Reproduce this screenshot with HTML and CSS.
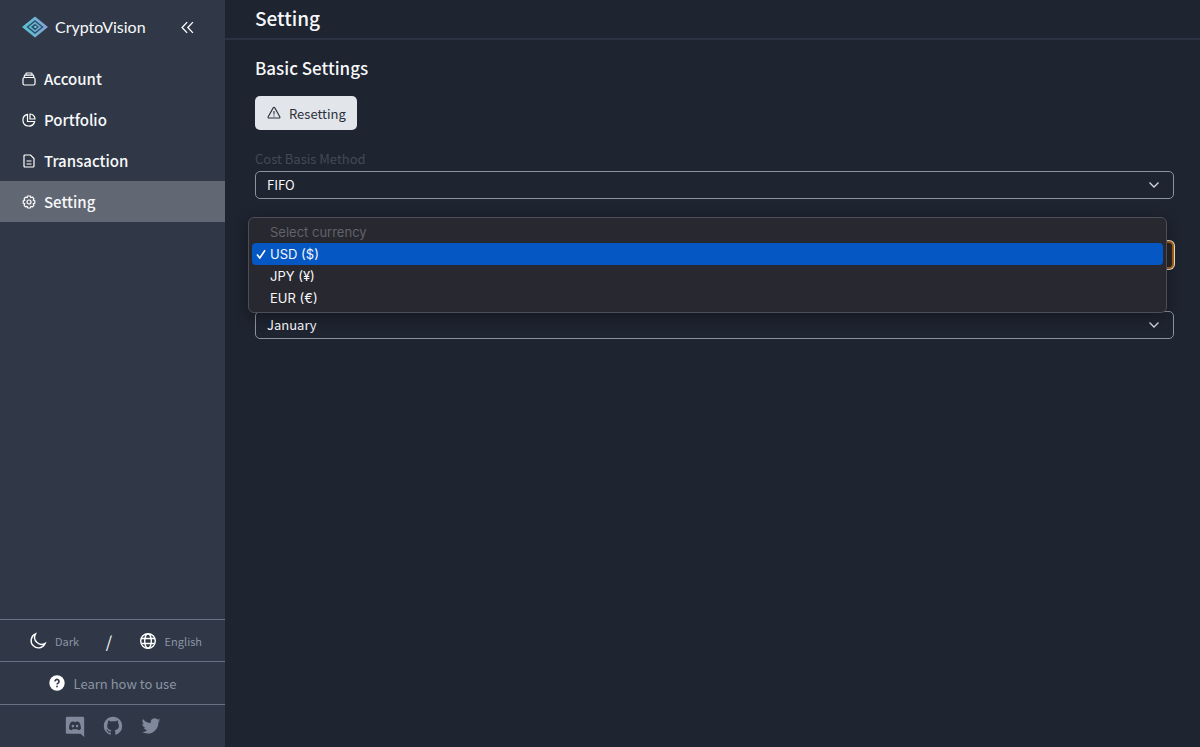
FILE: index.html
```html
<!DOCTYPE html>
<html lang="en">
<head>
    <meta charset="UTF-8">
    <meta name="viewport" content="width=device-width, initial-scale=1.0">
    <title>CryptoVision</title>
    <link rel="stylesheet" href="styles.css">
</head>
<body>

    <aside class="sidebar">
        <div class="brand">
            <svg class="brand-logo" viewBox="0 0 26 22">
                <defs>
                    <linearGradient id="logoFill" x1="0" y1="0" x2="1" y2="0">
                        <stop offset="0" stop-color="#55c4cf"/>
                        <stop offset="1" stop-color="#8a9fd8"/>
                    </linearGradient>
                </defs>
                <path fill="url(#logoFill)" d="M13 0.5 26 11 13 21.5 0 11z"/>
                <path fill="none" stroke="#27536c" stroke-width="1.4" d="M13 5 20.5 11 13 17 5.5 11z"/>
                <path fill="#27536c" d="M13 7.800 17 11 13 14.200 9 11z"/>
                <circle cx="13.4" cy="10.900" r="1.200" fill="#7cc4dc"/>
            </svg>
            <span class="brand-name">CryptoVision</span>
            <button class="collapse-button" type="button" aria-label="Collapse menu">
                <svg class="icon-collapse" viewBox="0 0 12 12"><path d="M5.7 1 1 6l4.7 5M11 1 6.3 6l4.7 5"/></svg>
            </button>
        </div>

        <nav class="menu">
            <a class="menu-item" href="#account">
                <svg class="menu-icon" viewBox="0 0 14 14"><rect x="1" y="5.500" width="12" height="7.500" rx="1.500"/><path d="M2.300 5.500V4q0-.8.8-.8h7.800q.8 0 .8.8v1.500M4 3.200V1.600q0-.6.6-.6h4.800q.6 0 .6.6v1.600"/></svg>
                Account
            </a>
            <a class="menu-item" href="#portfolio">
                <svg class="menu-icon" viewBox="0 0 14 14"><path d="M5.500 1.400A5.900 5.900 0 1 0 12.600 8.500H5.500z"/><path d="M8 1v5h5A5 5 0 0 0 8 1z"/></svg>
                Portfolio
            </a>
            <a class="menu-item" href="#transaction">
                <svg class="menu-icon" viewBox="0 0 14 14"><path d="M2 2q0-1 1-1h5.500L12 4.500V12q0 1-1 1H3q-1 0-1-1zM4.500 7h5M4.500 10h5"/></svg>
                Transaction
            </a>
            <a class="menu-item active" href="#setting">
                <svg class="menu-icon" viewBox="0 0 14 14"><path d="M5.700 1h2.600l.6 1.500 1.700-.3 1.300 1.600-.6 1.500 1.500.7v2l-1.500.7.6 1.500-1.300 1.600-1.700-.3L8.300 13H5.700l-.6-1.500-1.700.3-1.300-1.600.6-1.500L1.200 8V6l1.500-.7-.6-1.500 1.300-1.600 1.700.3z"/><circle cx="7" cy="7" r="2"/></svg>
                Setting
            </a>
        </nav>

        <div class="sidebar-row preferences">
            <button class="pref-button" type="button">
                <svg class="icon-white" viewBox="0 0 18 18"><path d="M6.500 1.900A7.300 7.300 0 1 0 16.200 11.300 7 7 0 0 1 6.500 1.900z"/></svg>
                Dark
            </button>
            <span class="divider">/</span>
            <button class="pref-button" type="button">
                <svg class="icon-white" viewBox="0 0 18 18"><circle cx="9" cy="9" r="7.300"/><ellipse cx="9" cy="9" rx="3.300" ry="7.300"/><path d="M2.300 6.500h13.400M2.300 11.500h13.400"/></svg>
                English
            </button>
        </div>
        <div class="sidebar-row">
            <a class="help-link" href="#help">
                <svg class="icon-help" viewBox="0 0 16 16"><circle cx="8" cy="8" r="7.700" fill="#fff"/><path d="M6 6.400a2 2 0 1 1 3.100 1.700C8.300 8.600 8 8.800 8 9.600" fill="none" stroke="#2f3847" stroke-width="1.600"/><rect x="7.200" y="10.700" width="1.600" height="1.600" fill="#2f3847"/></svg>
                Learn how to use
            </a>
        </div>
        <div class="sidebar-row socials">
            <a href="#discord" aria-label="Discord">
                <svg class="social-icon" viewBox="0 0 24 24"><path fill-rule="evenodd" d="M3.500 2h17A1.500 1.500 0 0 1 22 3.500V24l-4-3.500H3.500A1.500 1.500 0 0 1 2 19V3.500A1.500 1.500 0 0 1 3.500 2zM8 7.500C6.500 8 5.500 12 5.500 15c1 1.300 2.500 1.500 3.200 1.500l.8-1.300c1.600.4 3.400.4 5 0l.8 1.300c.7 0 2.200-.2 3.200-1.500 0-3-1-7-2.500-7.500-.8-.4-1.700-.5-2.500-.5l-.4.700h-2.200L10.500 7c-.8 0-1.700.1-2.500.5zM9.700 10.500a1.400 1.500 0 1 1 0 3 1.400 1.500 0 0 1 0-3zM14.300 10.500a1.400 1.500 0 1 1 0 3 1.400 1.500 0 0 1 0-3z"/></svg>
            </a>
            <a href="#github" aria-label="GitHub">
                <svg class="social-icon" viewBox="0 0 24 24"><path d="M12 2C6.475 2 2 6.475 2 12a9.994 9.994 0 0 0 6.838 9.488c.5.087.687-.213.687-.476 0-.237-.013-1.024-.013-1.862-2.512.463-3.162-.612-3.362-1.175-.113-.288-.6-1.175-1.025-1.413-.35-.187-.85-.65-.013-.662.788-.013 1.350.725 1.538 1.025.9 1.512 2.338 1.087 2.912.825.088-.65.35-1.087.638-1.337-2.225-.25-4.550-1.113-4.550-4.938 0-1.088.387-1.987 1.025-2.688-.1-.25-.45-1.275.1-2.650 0 0 .837-.262 2.750 1.026a9.280 9.280 0 0 1 2.500-.338c.85 0 1.700.112 2.500.337 1.912-1.300 2.750-1.024 2.750-1.024.55 1.375.2 2.400.1 2.650.637.7 1.025 1.587 1.025 2.687 0 3.838-2.337 4.688-4.562 4.938.362.312.675.912.675 1.850 0 1.337-.013 2.412-.013 2.750 0 .262.188.574.688.474A10.016 10.016 0 0 0 22 12c0-5.525-4.475-10-10-10z"/></svg>
            </a>
            <a href="#twitter" aria-label="Twitter">
                <svg class="social-icon" viewBox="0 0 24 24"><path d="M22.162 5.656a8.384 8.384 0 0 1-2.402.658A4.196 4.196 0 0 0 21.600 4c-.82.488-1.719.83-2.656 1.015a4.182 4.182 0 0 0-7.126 3.814 11.874 11.874 0 0 1-8.620-4.370 4.168 4.168 0 0 0-.566 2.103c0 1.450.738 2.731 1.860 3.481a4.168 4.168 0 0 1-1.894-.523v.052a4.185 4.185 0 0 0 3.355 4.101 4.210 4.210 0 0 1-1.890.072A4.185 4.185 0 0 0 7.970 16.650a8.394 8.394 0 0 1-6.191 1.732 11.830 11.830 0 0 0 6.410 1.880c7.693 0 11.900-6.373 11.900-11.900 0-.18-.005-.362-.013-.54a8.496 8.496 0 0 0 2.087-2.165z"/></svg>
            </a>
        </div>
    </aside>

    <main class="content">
        <header class="page-header">
            <h1>Setting</h1>
        </header>
        <section class="settings">
            <h2>Basic Settings</h2>
            <button class="reset-button" type="button">
                <svg class="icon-warning" viewBox="0 0 14 14"><path d="M6.200 1.900q.8-1.200 1.600 0l5 8.800q.5 1.300-.8 1.300H2q-1.300 0-.8-1.300zM7 5v3.500M7 9.400v1.200"/></svg>
                Resetting
            </button>

            <div class="field">
                <label for="costBasis">Cost Basis Method</label>
                <div class="select-box">
                    <select id="costBasis">
                        <option>FIFO</option>
                    </select>
                    <svg class="chevron" viewBox="0 0 12 12"><path d="M1.500 3.500 6 8l4.500-4.500"/></svg>
                </div>
            </div>

            <div class="field">
                <div class="select-box open">
                    <select id="currency" aria-label="Currency"></select>
                </div>
                <ul class="dropdown" role="listbox" aria-label="Select currency">
                    <li class="option disabled" role="option" aria-disabled="true">Select currency</li>
                    <li class="option selected" role="option" aria-selected="true">
                        <svg class="check" viewBox="0 0 10 10"><path d="M1 5.500 3.800 9 9 1.200"/></svg>USD ($)
                    </li>
                    <li class="option" role="option">JPY (¥)</li>
                    <li class="option" role="option">EUR (€)</li>
                </ul>
            </div>

            <div class="field">
                <div class="select-box">
                    <select id="startMonth" aria-label="Month">
                        <option>January</option>
                    </select>
                    <svg class="chevron" viewBox="0 0 12 12"><path d="M1.500 3.500 6 8l4.500-4.500"/></svg>
                </div>
            </div>
        </section>
    </main>

</body>
</html>
```

FILE: styles.css
```css
* {
    box-sizing: border-box;
}

body {
    margin: 0;
    display: flex;
    min-height: 100vh;
    background-color: #1e2430;
    color: #f7f8fa;
    font-family: "Noto Sans CJK JP", "Noto Sans", sans-serif;
    font-size: 13px;
}

button,
select {
    font: inherit;
    color: inherit;
    cursor: pointer;
}

a {
    color: inherit;
    text-decoration: none;
}

svg {
    display: block;
    flex-shrink: 0;
}

.sidebar {
    width: 225px;
    flex-shrink: 0;
    display: flex;
    flex-direction: column;
    background-color: #303847;
}

.brand {
    display: flex;
    align-items: center;
    height: 58px;
    padding: 0 31px 4px 22px;
}

.brand-logo {
    width: 26px;
    height: 22px;
    margin-right: 7px;
}

.brand-name {
    font-family: Lato, sans-serif;
    font-size: 16px;
    line-height: 20px;
}

.collapse-button {
    margin-left: auto;
    padding: 0;
    border: none;
    background: none;
}

.icon-collapse {
    width: 13px;
    height: 13px;
    fill: none;
    stroke: #fff;
    stroke-width: 1.2;
}

.menu {
    flex-grow: 1;
}

.menu-item {
    display: flex;
    align-items: center;
    gap: 8px;
    height: 41px;
    padding-left: 22px;
    font-size: 15px;
    font-weight: 500;
}

.menu-item.active {
    background-color: #616773;
}

.menu-icon {
    width: 14px;
    height: 14px;
    fill: none;
    stroke: #fff;
    stroke-width: 1.2;
}

.sidebar-row {
    display: flex;
    align-items: center;
    justify-content: center;
    height: 43px;
    border-top: 1px solid #687284;
    color: #8b94a5;
}

.preferences {
    height: 42px;
    justify-content: space-between;
    padding: 0 23px 0 29px;
}

.pref-button {
    display: flex;
    align-items: center;
    gap: 8px;
    padding: 0;
    border: none;
    background: none;
    font-size: 11px;
}

.divider {
    color: #fff;
    font-size: 16px;
}

.icon-white {
    width: 18px;
    height: 18px;
    fill: none;
    stroke: #fff;
    stroke-width: 1.4;
}

.help-link {
    display: flex;
    align-items: center;
    gap: 9px;
}

.icon-help {
    width: 16px;
    height: 16px;
}

.socials {
    gap: 16px;
}

.social-icon {
    width: 22px;
    height: 22px;
    fill: #7f899b;
}

.content {
    flex-grow: 1;
    min-width: 0;
}

.page-header {
    display: flex;
    align-items: center;
    height: 40px;
    padding: 0 30px 2px;
    border-bottom: 2px solid #2b3140;
}

h1,
h2 {
    margin: 0;
    font-weight: 500;
    line-height: 26px;
}

h1 {
    font-size: 19px;
}

h2 {
    font-size: 17px;
}

.settings {
    padding: 15px 26px 0 30px;
}

.reset-button {
    display: flex;
    align-items: center;
    gap: 8px;
    height: 34px;
    margin: 15px 0 20px;
    padding: 0 11px 0 12px;
    border: none;
    border-radius: 5px;
    background-color: #e2e5ea;
    color: #2b303b;
}

.icon-warning {
    width: 14px;
    height: 14px;
    fill: none;
    stroke: #2b303b;
    stroke-width: 1.1;
}

.field {
    position: relative;
    display: flex;
    flex-direction: column;
    justify-content: flex-end;
    height: 49px;
    margin-bottom: 21px;
}

.field label {
    height: 21px;
    color: #434a57;
    line-height: 18px;
}

.select-box {
    display: flex;
    align-items: center;
    height: 28px;
    padding-right: 13px;
    border: 1px solid #8c929e;
    border-radius: 5px;
}

.select-box.open {
    border: 2px solid #a4631a;
    background-color: #2a2624;
    box-shadow: 0 0 0 1px #f3dfc8;
}

.select-box select {
    flex-grow: 1;
    padding: 0 11px;
    border: none;
    outline: none;
    background: transparent;
    appearance: none;
    line-height: 20px;
}

.chevron {
    width: 12px;
    height: 12px;
    fill: none;
    stroke: #d5d9e0;
    stroke-width: 1.3;
    pointer-events: none;
}

.dropdown {
    position: absolute;
    top: -3px;
    left: -7px;
    z-index: 1;
    width: 100%;
    margin: 0;
    padding: 3px;
    border: 1px solid #4d4e57;
    border-radius: 6px;
    background-color: #282830;
    box-shadow: 0 4px 14px rgba(0, 0, 0, 0.35);
    list-style: none;
    font-family: Inter, sans-serif;
    line-height: 22px;
}

.option {
    position: relative;
    padding-left: 18px;
    border-radius: 4px;
}

.option.disabled {
    color: #62626a;
}

.option.selected {
    background-color: #0558c4;
}

.check {
    position: absolute;
    top: 6px;
    left: 4px;
    width: 10px;
    height: 10px;
    fill: none;
    stroke: #fff;
    stroke-width: 1.6;
}
```
